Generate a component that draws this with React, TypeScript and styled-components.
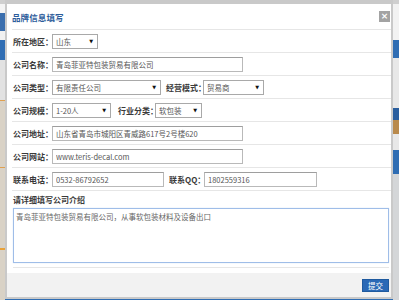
import React from "react";
import styled, { createGlobalStyle } from "styled-components";

const GlobalStyle = createGlobalStyle`
  body {
    margin: 0;
    font-family: "Noto Sans CJK SC", "Noto Sans", sans-serif;
  }
`;

interface StripPart {
  h: number;
  c: string;
}

const leftParts: StripPart[] = [
  { h: 4, c: "#cfcfcf" },
  { h: 9, c: "#f4f4f4" },
  { h: 18, c: "#3b6fae" },
  { h: 9, c: "#f1f1f1" },
  { h: 20, c: "#2f6db3" },
  { h: 40, c: "#e2e2e2" },
  { h: 1, c: "#e0a050" },
  { h: 66, c: "#d9d2c6" },
  { h: 1, c: "#e0a050" },
  { h: 80, c: "#d9d2c6" },
  { h: 2, c: "#e8a23a" },
  { h: 50, c: "#d9d2c6" },
];

const rightParts: StripPart[] = [
  { h: 4, c: "#cfcfcf" },
  { h: 36, c: "#f2f2f2" },
  { h: 18, c: "#2f6db3" },
  { h: 50, c: "#e8e8e8" },
  { h: 12, c: "#2a5e9e" },
  { h: 14, c: "#b98a4c" },
  { h: 16, c: "#e8e8e8" },
  { h: 24, c: "#2f6db3" },
  { h: 126, c: "#d4d6d8" },
];

const regions = [
  { label: "所在地区：" },
];

const Page = styled.div`
  position: relative;
  width: 399px;
  height: 300px;
  overflow: hidden;
  display: flex;
  justify-content: space-between;
  background: #2f6db3;
`;

const Strip = styled.div<{ $w: number }>`
  width: ${(p) => p.$w}px;
  display: flex;
  flex-direction: column;
`;

const StripBlock = styled.div<{ $h: number; $c: string }>`
  height: ${(p) => p.$h}px;
  background: ${(p) => p.$c};
  flex-shrink: 0;
`;

const Modal = styled.div`
  position: absolute;
  left: 5px;
  top: 0;
  width: 384px;
  height: 293px;
  border: 2px solid #c9c9c9;
  border-top-width: 4px;
  background: #fff;
  display: flex;
  flex-direction: column;
`;

const Header = styled.div`
  height: 25px;
  margin-left: 5px;
  border-bottom: 1px solid #e6e6e6;
  display: flex;
  align-items: center;
  justify-content: space-between;
`;

const Title = styled.div`
  font-size: 8.5px;
  font-weight: bold;
  color: #2d5c9a;
  letter-spacing: 0.1px;
`;

const CloseBtn = styled.div`
  width: 11px;
  height: 11px;
  margin-right: 1px;
  background: #a3a3a3;
  color: #fff;
  font-size: 9px;
  font-weight: bold;
  line-height: 11px;
  text-align: center;
  font-family: "DejaVu Sans", sans-serif;
`;

const Form = styled.div`
  margin-left: 5px;
  display: flex;
  flex-direction: column;
`;

const Row = styled.div`
  height: 22px;
  border-bottom: 1px solid #e6e6e6;
  padding-left: 1px;
  display: flex;
  align-items: center;
`;

const Label = styled.span<{ $w?: number; $gap?: number }>`
  width: ${(p) => p.$w ?? 39}px;
  margin-left: ${(p) => p.$gap ?? 0}px;
  flex-shrink: 0;
  font-size: 8px;
  font-weight: bold;
  color: #3a3a3a;
  white-space: nowrap;
`;

const Field = styled.input<{ $w: number }>`
  width: ${(p) => p.$w}px;
  height: 15px;
  box-sizing: border-box;
  border: 1px solid #b9b9b9;
  border-top-color: #9e9e9e;
  padding: 0 3px;
  font-family: "Noto Sans CJK SC", "Noto Sans", sans-serif;
  font-size: 7.5px;
  color: #555;
  outline: none;
`;

const Select = styled.div<{ $w: number }>`
  width: ${(p) => p.$w}px;
  height: 15px;
  box-sizing: border-box;
  border: 1px solid #a9a9a9;
  padding: 0 4px 0 3px;
  display: flex;
  align-items: center;
  justify-content: space-between;
  font-size: 7.5px;
  color: #555;
  background: #fff;
`;

const Arrow = styled.span`
  font-size: 5px;
  color: #111;
  font-family: "DejaVu Sans", sans-serif;
`;

const Intro = styled.div`
  margin-left: 6px;
  padding-bottom: 4px;
  margin-right: 2px;
  border-bottom: 1px solid #e6e6e6;
  display: flex;
  flex-direction: column;
`;

const IntroLabel = styled.div`
  height: 17px;
  display: flex;
  align-items: center;
  font-size: 8px;
  font-weight: bold;
  color: #3a3a3a;
`;

const IntroText = styled.textarea`
  height: 55px;
  box-sizing: border-box;
  border: 1px solid #9fbde8;
  box-shadow: 0 0 1px #c4d8f4;
  padding: 2px 2px;
  resize: none;
  font-family: "Noto Sans CJK SC", "Noto Sans", sans-serif;
  font-size: 7.5px;
  color: #666;
  outline: none;
`;

const Footer = styled.div`
  margin-top: auto;
  height: 24px;
  background: #f2f2f2;
  display: flex;
  align-items: center;
  justify-content: flex-end;
  padding-right: 2px;
`;

const SubmitBtn = styled.button`
  width: 27px;
  height: 13px;
  padding: 0;
  border: 1px solid #1f5a9f;
  background: #2a69b6;
  color: #fff;
  font-family: "Noto Sans CJK SC", sans-serif;
  font-size: 7.5px;
  line-height: 11px;
`;

const SelectBox: React.FC<{ w: number; value: string }> = ({ w, value }) => (
  <Select $w={w}>
    <span>{value}</span>
    <Arrow>▼</Arrow>
  </Select>
);

export default function App() {
  return (
    <>
      <GlobalStyle />
      <Page>
        <Strip $w={5}>
          {leftParts.map((p, i) => (
            <StripBlock key={i} $h={p.h} $c={p.c} />
          ))}
        </Strip>
        <Strip $w={6}>
          {rightParts.map((p, i) => (
            <StripBlock key={i} $h={p.h} $c={p.c} />
          ))}
        </Strip>

        <Modal>
          <Header>
            <Title>品牌信息填写</Title>
            <CloseBtn>×</CloseBtn>
          </Header>
          <Form>
            <Row>
              <Label>{regions[0].label}</Label>
              <SelectBox w={46} value="山东" />
            </Row>
            <Row>
              <Label>公司名称：</Label>
              <Field $w={191} defaultValue="青岛菲亚特包装贸易有限公司" />
            </Row>
            <Row>
              <Label>公司类型：</Label>
              <SelectBox w={109} value="有限责任公司" />
              <Label $gap={5} $w={37}>经营模式：</Label>
              <SelectBox w={61} value="贸易商" />
            </Row>
            <Row>
              <Label>公司规模：</Label>
              <SelectBox w={59} value="1-20人" />
              <Label $gap={7} $w={37}>行业分类：</Label>
              <SelectBox w={47} value="软包装" />
            </Row>
            <Row>
              <Label>公司地址：</Label>
              <Field $w={191} defaultValue="山东省青岛市城阳区青威路617号2号楼620" />
            </Row>
            <Row>
              <Label>公司网站：</Label>
              <Field $w={191} defaultValue="www.teris-decal.com" />
            </Row>
            <Row>
              <Label>联系电话：</Label>
              <Field $w={112} defaultValue="0532-86792652" />
              <Label $gap={5} $w={35}>联系QQ：</Label>
              <Field $w={113} defaultValue="1802559316" />
            </Row>
          </Form>
          <Intro>
            <IntroLabel>请详细填写公司介绍</IntroLabel>
            <IntroText defaultValue="青岛菲亚特包装贸易有限公司，从事软包装材料及设备出口" />
          </Intro>
          <Footer>
            <SubmitBtn>提交</SubmitBtn>
          </Footer>
        </Modal>
      </Page>
    </>
  );
}
